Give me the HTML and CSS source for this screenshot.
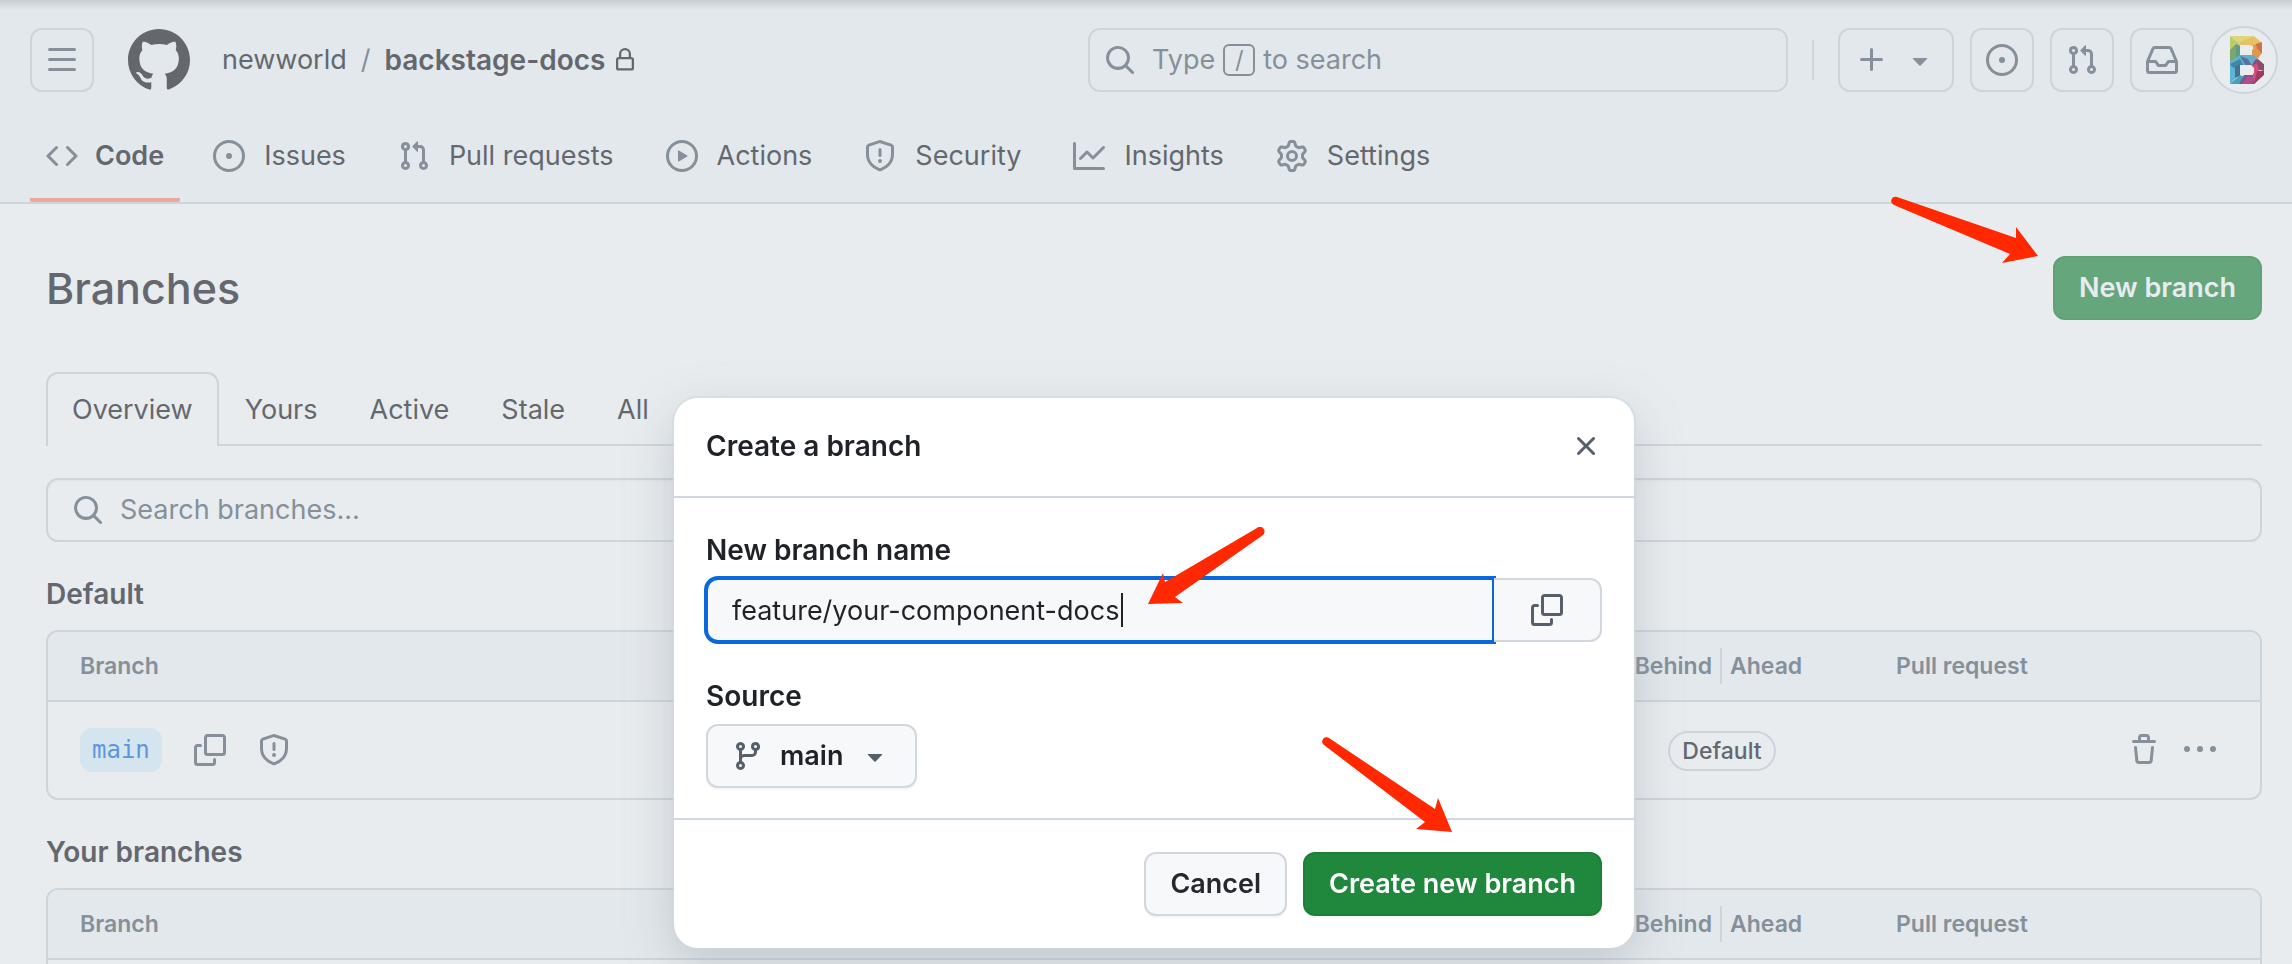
FILE: index.html
```html
<!DOCTYPE html>
<html lang="en">
<head>
<meta charset="utf-8">
<title>Branches · newworld/backstage-docs</title>
<link rel="stylesheet" href="styles.css">
</head>
<body>
<svg class="sprite" aria-hidden="true">
  <symbol id="i-bars" viewBox="0 0 16 16"><path d="M1 2.75A.75.75 0 0 1 1.75 2h12.5a.75.75 0 0 1 0 1.5H1.75A.75.75 0 0 1 1 2.75Zm0 5A.75.75 0 0 1 1.75 7h12.5a.75.75 0 0 1 0 1.5H1.75A.75.75 0 0 1 1 7.75ZM1.75 12h12.5a.75.75 0 0 1 0 1.5H1.75a.75.75 0 0 1 0-1.5Z"/></symbol>
  <symbol id="i-mark" viewBox="0 0 16 16"><path d="M8 0c4.42 0 8 3.58 8 8a8.013 8.013 0 0 1-5.45 7.59c-.4.08-.55-.17-.55-.38 0-.27.01-1.13.01-2.2 0-.75-.25-1.23-.54-1.48 1.78-.2 3.65-.88 3.65-3.95 0-.88-.31-1.59-.82-2.15.08-.2.36-1.02-.08-2.12 0 0-.67-.22-2.2.82-.64-.18-1.32-.27-2-.27-.68 0-1.36.09-2 .27-1.53-1.03-2.2-.82-2.2-.82-.44 1.1-.16 1.92-.08 2.12-.51.56-.82 1.28-.82 2.15 0 3.06 1.86 3.75 3.64 3.95-.23.2-.44.55-.51 1.07-.46.21-1.61.55-2.33-.66-.15-.24-.6-.83-1.23-.82-.67.01-.27.38.01.53.34.19.73.9.82 1.13.16.45.68 1.31 2.69.94 0 .67.01 1.3.01 1.49 0 .21-.15.45-.55.38A7.995 7.995 0 0 1 0 8c0-4.42 3.58-8 8-8Z"/></symbol>
  <symbol id="i-lock" viewBox="0 0 16 16"><path d="M4 4a4 4 0 0 1 8 0v2h.25c.966 0 1.75.784 1.75 1.75v5.5A1.75 1.75 0 0 1 12.25 15h-8.5A1.75 1.75 0 0 1 2 13.25v-5.5C2 6.784 2.784 6 3.75 6H4Zm8.25 3.5h-8.5a.25.25 0 0 0-.25.25v5.5c0 .138.112.25.25.25h8.5a.25.25 0 0 0 .25-.25v-5.5a.25.25 0 0 0-.25-.25ZM10.5 6V4a2.5 2.5 0 1 0-5 0v2Z"/></symbol>
  <symbol id="i-search" viewBox="0 0 16 16"><path d="M10.68 11.74a6 6 0 0 1-7.922-8.982 6 6 0 0 1 8.982 7.922l3.04 3.04a.749.749 0 0 1-.326 1.275.749.749 0 0 1-.734-.215ZM11.5 7a4.499 4.499 0 1 0-8.997 0A4.499 4.499 0 0 0 11.5 7Z"/></symbol>
  <symbol id="i-plus" viewBox="0 0 16 16"><path d="M7.75 2a.75.75 0 0 1 .75.75V7h4.25a.75.75 0 0 1 0 1.5H8.5v4.25a.75.75 0 0 1-1.5 0V8.5H2.75a.75.75 0 0 1 0-1.5H7V2.75A.75.75 0 0 1 7.75 2Z"/></symbol>
  <symbol id="i-caret" viewBox="0 0 16 16"><path d="m4.427 7.427 3.396 3.396a.25.25 0 0 0 .354 0l3.396-3.396A.25.25 0 0 0 11.396 7H4.604a.25.25 0 0 0-.177.427Z"/></symbol>
  <symbol id="i-issue" viewBox="0 0 16 16"><path d="M8 9.5a1.5 1.5 0 1 0 0-3 1.5 1.5 0 0 0 0 3Z"/><path d="M8 0a8 8 0 1 1 0 16A8 8 0 0 1 8 0ZM1.5 8a6.5 6.5 0 1 0 13 0 6.5 6.5 0 0 0-13 0Z"/></symbol>
  <symbol id="i-pull" viewBox="0 0 16 16"><path d="M1.5 3.25a2.25 2.25 0 1 1 3 2.122v5.256a2.251 2.251 0 1 1-1.5 0V5.372A2.25 2.25 0 0 1 1.5 3.25Zm5.677-.177L9.573.677A.25.25 0 0 1 10 .854V2.5h1A2.5 2.5 0 0 1 13.5 5v5.628a2.251 2.251 0 1 1-1.5 0V5a1 1 0 0 0-1-1h-1v1.646a.25.25 0 0 1-.427.177L7.177 3.427a.25.25 0 0 1 0-.354ZM3.75 2.5a.75.75 0 1 0 0 1.5.75.75 0 0 0 0-1.5Zm0 9.5a.75.75 0 1 0 0 1.5.75.75 0 0 0 0-1.5Zm8.25.75a.75.75 0 1 0 1.5 0 .75.75 0 0 0-1.5 0Z"/></symbol>
  <symbol id="i-inbox" viewBox="0 0 16 16"><path d="M2.8 2.06A1.75 1.75 0 0 1 4.41 1h7.18c.7 0 1.333.417 1.61 1.06l2.74 6.395c.04.093.06.194.06.295v4.5A1.75 1.75 0 0 1 14.25 15H1.75A1.75 1.75 0 0 1 0 13.25v-4.5c0-.101.02-.202.06-.295Zm1.61.44a.25.25 0 0 0-.23.152L1.887 8H4.75a.75.75 0 0 1 .6.3L6.625 10h2.75l1.275-1.7a.75.75 0 0 1 .6-.3h2.863L11.82 2.652a.25.25 0 0 0-.23-.152Zm10.09 7h-2.875l-1.275 1.7a.75.75 0 0 1-.6.3h-3.5a.75.75 0 0 1-.6-.3L4.375 9.5H1.5v3.75c0 .138.112.25.25.25h12.5a.25.25 0 0 0 .25-.25Z"/></symbol>
  <symbol id="i-code" viewBox="0 0 16 16"><path d="m11.28 3.22 4.25 4.25a.75.75 0 0 1 0 1.06l-4.25 4.25a.749.749 0 0 1-1.275-.326.749.749 0 0 1 .215-.734L13.94 8l-3.72-3.72a.749.749 0 0 1 .326-1.275.749.749 0 0 1 .734.215Zm-6.56 0a.751.751 0 0 1 1.042.018.751.751 0 0 1 .018 1.042L2.06 8l3.72 3.72a.749.749 0 0 1-.326 1.275.749.749 0 0 1-.734-.215L.47 8.53a.75.75 0 0 1 0-1.06Z"/></symbol>
  <symbol id="i-play" viewBox="0 0 16 16"><path d="M8 0a8 8 0 1 1 0 16A8 8 0 0 1 8 0ZM1.5 8a6.5 6.5 0 1 0 13 0 6.5 6.5 0 0 0-13 0Zm4.879-2.773 4.264 2.559a.25.25 0 0 1 0 .428l-4.264 2.559A.25.25 0 0 1 6 10.559V5.442a.25.25 0 0 1 .379-.215Z"/></symbol>
  <symbol id="i-shield" viewBox="0 0 16 16"><path d="M7.467.133a1.748 1.748 0 0 1 1.066 0l5.25 1.68A1.75 1.75 0 0 1 15 3.48V7c0 1.566-.32 3.182-1.303 4.682-.983 1.498-2.585 2.813-5.032 3.855a1.697 1.697 0 0 1-1.33 0c-2.447-1.042-4.049-2.357-5.032-3.855C1.32 10.182 1 8.566 1 7V3.48a1.75 1.75 0 0 1 1.217-1.667Zm.61 1.429a.25.25 0 0 0-.153 0l-5.25 1.68a.25.25 0 0 0-.174.238V7c0 1.358.275 2.666 1.057 3.86.784 1.194 2.121 2.34 4.366 3.297a.196.196 0 0 0 .154 0c2.245-.956 3.582-2.104 4.366-3.298C13.225 9.666 13.5 8.36 13.5 7V3.48a.251.251 0 0 0-.174-.237l-5.25-1.68ZM8.75 4.75v3a.75.75 0 0 1-1.5 0v-3a.75.75 0 0 1 1.5 0ZM9 10.5a1 1 0 1 1-2 0 1 1 0 0 1 2 0Z"/></symbol>
  <symbol id="i-graph" viewBox="0 0 16 16"><path d="M1.5 1.75V13.5h13.75a.75.75 0 0 1 0 1.5H.75a.75.75 0 0 1-.75-.75V1.75a.75.75 0 0 1 1.5 0Zm14.28 2.53-5.25 5.25a.75.75 0 0 1-1.06 0L7 7.06 4.28 9.78a.751.751 0 0 1-1.042-.018.751.751 0 0 1-.018-1.042l3.25-3.25a.75.75 0 0 1 1.06 0L10 7.94l4.72-4.72a.751.751 0 0 1 1.042.018.751.751 0 0 1 .018 1.042Z"/></symbol>
  <symbol id="i-gear" viewBox="0 0 16 16"><path d="M8 0a8.2 8.2 0 0 1 .701.031C9.444.095 9.99.645 10.16 1.29l.288 1.107c.018.066.079.158.212.224.231.114.454.243.668.386.123.082.233.09.299.071l1.103-.303c.644-.176 1.392.021 1.82.63.27.385.506.792.704 1.218.315.675.111 1.422-.364 1.891l-.814.806c-.049.048-.098.147-.088.294.016.257.016.515 0 .772-.01.147.038.246.088.294l.814.806c.475.469.679 1.216.364 1.891a7.977 7.977 0 0 1-.704 1.217c-.428.61-1.176.807-1.82.63l-1.102-.302c-.067-.019-.177-.011-.3.071a5.909 5.909 0 0 1-.668.386c-.133.066-.194.158-.211.224l-.29 1.106c-.168.646-.715 1.196-1.458 1.26a8.006 8.006 0 0 1-1.402 0c-.743-.064-1.289-.614-1.458-1.26l-.289-1.106c-.018-.066-.079-.158-.212-.224a5.738 5.738 0 0 1-.668-.386c-.123-.082-.233-.09-.299-.071l-1.103.303c-.644.176-1.392-.021-1.82-.63a8.12 8.12 0 0 1-.704-1.218c-.315-.675-.111-1.422.363-1.891l.815-.806c.05-.048.098-.147.088-.294a6.214 6.214 0 0 1 0-.772c.01-.147-.038-.246-.088-.294l-.815-.806C.635 6.045.431 5.298.746 4.623a7.92 7.92 0 0 1 .704-1.217c.428-.61 1.176-.807 1.82-.63l1.102.302c.067.019.177.011.3-.071.214-.143.437-.272.668-.386.133-.066.194-.158.211-.224l.29-1.106C6.009.645 6.556.095 7.299.03 7.53.01 7.764 0 8 0Zm-.571 1.525c-.036.003-.108.036-.137.146l-.289 1.105c-.147.561-.549.967-.998 1.189-.173.086-.34.183-.5.29-.417.278-.97.423-1.529.27l-1.103-.303c-.109-.03-.175.016-.195.045-.22.312-.412.644-.573.99-.014.031-.021.11.059.19l.815.806c.411.406.562.957.53 1.456a4.709 4.709 0 0 0 0 .582c.032.499-.119 1.05-.53 1.456l-.815.806c-.081.08-.073.159-.059.19.162.346.353.677.573.989.02.03.085.076.195.046l1.102-.303c.56-.153 1.113-.008 1.53.27.161.107.328.204.501.29.447.222.85.629.997 1.189l.289 1.105c.029.109.101.143.137.146a6.6 6.6 0 0 0 1.142 0c.036-.003.108-.036.137-.146l.289-1.105c.147-.561.549-.967.998-1.189.173-.086.34-.183.5-.29.417-.278.97-.423 1.529-.27l1.103.303c.109.029.175-.016.195-.045.22-.313.411-.644.573-.99.014-.031.021-.11-.059-.19l-.815-.806c-.411-.406-.562-.957-.53-1.456a4.709 4.709 0 0 0 0-.582c-.032-.499.119-1.05.53-1.456l.815-.806c.081-.08.073-.159.059-.19a6.464 6.464 0 0 0-.573-.989c-.02-.03-.085-.076-.195-.046l-1.102.303c-.56.153-1.113.008-1.53-.27a4.44 4.44 0 0 0-.501-.29c-.447-.222-.85-.629-.997-1.189l-.289-1.105c-.029-.11-.101-.143-.137-.146a6.6 6.6 0 0 0-1.142 0ZM11 8a3 3 0 1 1-6 0 3 3 0 0 1 6 0ZM9.5 8a1.5 1.5 0 1 0-3.001.001A1.5 1.5 0 0 0 9.5 8Z"/></symbol>
  <symbol id="i-copy" viewBox="0 0 16 16"><path d="M0 6.75C0 5.784.784 5 1.75 5h1.5a.75.75 0 0 1 0 1.5h-1.5a.25.25 0 0 0-.25.25v7.5c0 .138.112.25.25.25h7.5a.25.25 0 0 0 .25-.25v-1.5a.75.75 0 0 1 1.5 0v1.5A1.75 1.75 0 0 1 9.25 16h-7.5A1.75 1.75 0 0 1 0 14.25Z"/><path d="M5 1.75C5 .784 5.784 0 6.75 0h7.5C15.216 0 16 .784 16 1.75v7.5A1.75 1.75 0 0 1 14.25 11h-7.5A1.75 1.75 0 0 1 5 9.25Zm1.75-.25a.25.25 0 0 0-.25.25v7.5c0 .138.112.25.25.25h7.5a.25.25 0 0 0 .25-.25v-7.5a.25.25 0 0 0-.25-.25Z"/></symbol>
  <symbol id="i-trash" viewBox="0 0 16 16"><path d="M11 1.75V3h2.25a.75.75 0 0 1 0 1.5H2.75a.75.75 0 0 1 0-1.5H5V1.75C5 .784 5.784 0 6.75 0h2.5C10.216 0 11 .784 11 1.75ZM4.496 6.675l.66 6.6a.25.25 0 0 0 .249.225h5.19a.25.25 0 0 0 .249-.225l.66-6.6a.75.75 0 0 1 1.492.149l-.66 6.6A1.748 1.748 0 0 1 10.595 15h-5.19a1.75 1.75 0 0 1-1.741-1.575l-.66-6.6a.75.75 0 1 1 1.492-.15ZM6.5 1.75V3h3V1.75a.25.25 0 0 0-.25-.25h-2.5a.25.25 0 0 0-.25.25Z"/></symbol>
  <symbol id="i-kebab" viewBox="0 0 16 16"><path d="M8 9a1.5 1.5 0 1 0 0-3 1.5 1.5 0 0 0 0 3ZM1.5 9a1.5 1.5 0 1 0 0-3 1.5 1.5 0 0 0 0 3Zm13 0a1.5 1.5 0 1 0 0-3 1.5 1.5 0 0 0 0 3Z"/></symbol>
  <symbol id="i-branch" viewBox="0 0 16 16"><path d="M9.5 3.25a2.25 2.25 0 1 1 3 2.122V6A2.5 2.5 0 0 1 10 8.5H6a1 1 0 0 0-1 1v1.128a2.251 2.251 0 1 1-1.5 0V5.372a2.25 2.25 0 1 1 1.5 0v1.836A2.493 2.493 0 0 1 6 7h4a1 1 0 0 0 1-1v-.628A2.25 2.25 0 0 1 9.5 3.25Zm-6 0a.75.75 0 1 0 1.5 0 .75.75 0 0 0-1.5 0Zm8.25-.75a.75.75 0 1 0 0 1.5.75.75 0 0 0 0-1.5ZM4.25 12a.75.75 0 1 0 0 1.5.75.75 0 0 0 0-1.5Z"/></symbol>
  <symbol id="i-x" viewBox="0 0 16 16"><path d="M3.72 3.72a.75.75 0 0 1 1.06 0L8 6.94l3.22-3.22a.749.749 0 0 1 1.275.326.749.749 0 0 1-.215.734L9.06 8l3.22 3.22a.749.749 0 0 1-.326 1.275.749.749 0 0 1-.734-.215L8 9.06l-3.22 3.22a.751.751 0 0 1-1.042-.018.751.751 0 0 1-.018-1.042L6.94 8 3.72 4.78a.75.75 0 0 1 0-1.06Z"/></symbol>
</svg>

<div class="app">
<header class="app-header">
  <div class="topbar">
    <button class="icon-btn" type="button" aria-label="Open menu"><svg class="icon"><use href="#i-bars"/></svg></button>
    <a class="home" href="#" aria-label="Homepage"><svg class="mark"><use href="#i-mark"/></svg></a>
    <nav class="crumbs" aria-label="Breadcrumb">
      <a href="#">newworld</a>
      <span class="slash">/</span>
      <a class="repo" href="#">backstage-docs</a>
      <svg class="icon-sm"><use href="#i-lock"/></svg>
    </nav>
    <div class="topbar-right">
      <button class="search-btn" type="button">
        <svg class="icon"><use href="#i-search"/></svg>
        <span class="search-hint">Type <kbd>/</kbd> to search</span>
      </button>
      <span class="divider"></span>
      <div class="actions">
        <button class="icon-btn create" type="button" aria-label="Create new"><svg class="icon"><use href="#i-plus"/></svg><svg class="icon"><use href="#i-caret"/></svg></button>
        <button class="icon-btn" type="button" aria-label="Issues"><svg class="icon"><use href="#i-issue"/></svg></button>
        <button class="icon-btn" type="button" aria-label="Pull requests"><svg class="icon"><use href="#i-pull"/></svg></button>
        <button class="icon-btn" type="button" aria-label="Notifications"><svg class="icon"><use href="#i-inbox"/></svg></button>
        <button class="avatar" type="button" aria-label="Account">
          <svg viewBox="0 0 34 48" class="avatar-art">
            <path fill="#ddd77a" d="M0 0h24l-6 4-8 4z"/>
            <path fill="#b9ce6a" d="M0 0l10 8v10L0 26z"/>
            <path fill="#7ba66f" d="M0 14l6-6v18l-6 8z"/>
            <path fill="#5e9c82" d="M6 8l4 2v11l-4 5z"/>
            <path fill="#e6c263" d="M10 6L24 0l8 6-9 4H10z"/>
            <path fill="#e3a04b" d="M23 9l9-3v8l-9 1z"/>
            <path fill="#cf6f4c" d="M26 8l6-2v12l-5-5z"/>
            <path fill="#e2974c" d="M22 14l5-2 5 6-4 5-6-2z"/>
            <path fill="#5fb1c9" d="M0 25l10-6h13l5 4-6 7H10L0 34z"/>
            <path fill="#3f86a8" d="M0 28l10-5 4 7-8 5z"/>
            <path fill="#5b6f9b" d="M10 20l8 3 4 7h-6z"/>
            <path fill="#5eb4d3" d="M0 31l6 1v10L0 48z"/>
            <path fill="#456f94" d="M5 31l5-3v12l-5 2z"/>
            <path fill="#4ba0b9" d="M0 48l10-9 6 3-6 6z"/>
            <path fill="#7a5a8d" d="M9 48l5-9h9l3 9z"/>
            <path fill="#b64b8f" d="M12 48l6-8 6 2-4 6z"/>
            <path fill="#8e4b73" d="M25 24l3-1 6 5v7l-9-2-3-4z"/>
            <path fill="#d44f7e" d="M22 30l5-3 2 8 5 0v4L24 48l-1-9z"/>
            <path fill="#a5385d" d="M27 35h7v4l-10 9z"/>
            <path fill="#e8ecef" d="M10 9h10l2 3v5l-2 2H10zM10 29h11l3 3v5l-2 2H10z"/>
          </svg>
        </button>
      </div>
    </div>
  </div>
  <nav class="repo-nav" aria-label="Repository">
    <a class="repo-tab current" href="#" aria-current="page"><svg class="icon"><use href="#i-code"/></svg><span>Code</span></a>
    <a class="repo-tab" href="#"><svg class="icon"><use href="#i-issue"/></svg><span>Issues</span></a>
    <a class="repo-tab" href="#"><svg class="icon"><use href="#i-pull"/></svg><span>Pull requests</span></a>
    <a class="repo-tab" href="#"><svg class="icon"><use href="#i-play"/></svg><span>Actions</span></a>
    <a class="repo-tab" href="#"><svg class="icon"><use href="#i-shield"/></svg><span>Security</span></a>
    <a class="repo-tab" href="#"><svg class="icon"><use href="#i-graph"/></svg><span>Insights</span></a>
    <a class="repo-tab" href="#"><svg class="icon"><use href="#i-gear"/></svg><span>Settings</span></a>
  </nav>
</header>

<main class="page">
  <div class="page-head">
    <h1>Branches</h1>
    <button class="btn primary faded" type="button">New branch</button>
  </div>
  <nav class="tabs" aria-label="Branch filters">
    <a class="tab selected" href="#" aria-current="page">Overview</a>
    <a class="tab" href="#">Yours</a>
    <a class="tab" href="#">Active</a>
    <a class="tab" href="#">Stale</a>
    <a class="tab" href="#">All</a>
  </nav>
  <label class="filter">
    <svg class="icon"><use href="#i-search"/></svg>
    <input type="search" placeholder="Search branches..." aria-label="Search branches">
  </label>

  <section class="group">
    <h2>Default</h2>
    <div class="box">
      <table>
        <colgroup><col><col class="col-counts"><col class="col-pr"><col class="col-actions"></colgroup>
        <thead>
          <tr><th scope="col">Branch</th><th scope="col"><span class="counts"><span>Behind</span><span>Ahead</span></span></th><th scope="col">Pull request</th><th></th></tr>
        </thead>
        <tbody>
          <tr>
            <td><div class="branch-cell"><a class="branch-name" href="#">main</a><button class="plain" type="button" aria-label="Copy branch name"><svg class="icon"><use href="#i-copy"/></svg></button><svg class="icon"><use href="#i-shield"/></svg></div></td>
            <td class="center"><span class="pill">Default</span></td>
            <td></td>
            <td><div class="row-actions"><button class="plain" type="button" aria-label="Delete branch"><svg class="icon"><use href="#i-trash"/></svg></button><button class="plain" type="button" aria-label="More options"><svg class="icon"><use href="#i-kebab"/></svg></button></div></td>
          </tr>
        </tbody>
      </table>
    </div>
  </section>

  <section class="group">
    <h2>Your branches</h2>
    <div class="box">
      <table>
        <colgroup><col><col class="col-counts"><col class="col-pr"><col class="col-actions"></colgroup>
        <thead>
          <tr><th scope="col">Branch</th><th scope="col"><span class="counts"><span>Behind</span><span>Ahead</span></span></th><th scope="col">Pull request</th><th></th></tr>
        </thead>
        <tbody>
          <tr><td></td><td></td><td></td><td></td></tr>
        </tbody>
      </table>
    </div>
  </section>
</main>
</div>

<div class="overlay">
  <div class="dialog" role="dialog" aria-modal="true" aria-labelledby="dialog-title">
    <div class="dialog-head">
      <h2 id="dialog-title">Create a branch</h2>
      <button class="plain" type="button" aria-label="Close"><svg class="icon"><use href="#i-x"/></svg></button>
    </div>
    <div class="dialog-body">
      <div class="field">
        <label for="branch-name">New branch name</label>
        <div class="input-group">
          <div class="input-wrap">
            <input id="branch-name" type="text" value="feature/your-component-docs">
            <span class="caret"></span>
          </div>
          <button class="copy-btn" type="button" aria-label="Copy"><svg class="icon"><use href="#i-copy"/></svg></button>
        </div>
      </div>
      <div class="field">
        <label for="source">Source</label>
        <div class="select-wrap">
          <svg class="icon lead"><use href="#i-branch"/></svg>
          <select id="source"><option>main</option></select>
          <svg class="icon tail"><use href="#i-caret"/></svg>
        </div>
      </div>
    </div>
    <div class="dialog-foot">
      <button class="btn" type="button">Cancel</button>
      <button class="btn primary" type="button">Create new branch</button>
    </div>
  </div>
</div>

<svg class="arrow arrow-new" viewBox="0 0 148 68"><path d="M6 1 125 42V31l22 29-36 7 8-9L3 9A4 4 0 0 1 6 1Z"/></svg>
<svg class="arrow arrow-name" viewBox="0 0 118 78"><path d="M110 1 18 55 16 46 1 77 36 76 28 70 116 8A4 4 0 0 0 110 1Z"/></svg>
<svg class="arrow arrow-create" viewBox="0 0 131 96"><path d="M7 1 113 72 116 61 130 95 94 92 103 85 2 8A4 4 0 0 1 7 1Z"/></svg>
</body>
</html>
```
FILE: styles.css
```css
:root {
  --bg: #e8ecef;
  --bg-subtle: #e3e8ec;
  --line: #ccd5dc;
  --text: #64686e;
  --muted: #85909a;
  --ink: #1f2328;
  --ink-muted: #57606a;
  --ink-line: #d0d7de;
  --accent: #0969da;
  --sans: Inter, "Liberation Sans", sans-serif;
}

* { box-sizing: border-box; }

body {
  margin: 0;
  background: var(--bg);
  color: var(--text);
  font: 27px/40px var(--sans);
}

/* The page behind the open dialog does not scroll */
.app { height: 100vh; overflow: hidden; }

a { color: inherit; text-decoration: none; }
button, input, select { font: inherit; color: inherit; margin: 0; }
h1, h2 { margin: 0; }

.sprite { display: none; }
.icon { width: 32px; height: 32px; flex: none; display: block; fill: var(--muted); }
.icon-sm { width: 24px; height: 24px; flex: none; fill: var(--text); }
.plain { border: 0; padding: 0; background: none; }

/* Header */
.app-header {
  background: linear-gradient(#c8cdd1, var(--bg-subtle) 10px);
  border-bottom: 2px solid var(--line);
}
.topbar { display: flex; align-items: center; padding: 26px 14px 0 30px; }
.icon-btn {
  display: flex;
  align-items: center;
  justify-content: center;
  width: 64px;
  height: 64px;
  padding: 0;
  border: 2px solid var(--line);
  border-radius: 12px;
  background: none;
}
.icon-btn.create { width: 116px; gap: 16px; }
.home { margin: 0 32px 0 34px; }
.mark { display: block; width: 62px; height: 62px; fill: var(--text); }
.crumbs { display: flex; align-items: center; }
.slash { color: var(--muted); margin: 0 14px; }
.repo { font-size: 28px; font-weight: 600; margin-right: 8px; }
.topbar-right { display: flex; align-items: center; margin-left: auto; }
.search-btn {
  display: flex;
  align-items: center;
  gap: 16px;
  width: 700px;
  height: 64px;
  padding: 0 14px;
  border: 2px solid var(--line);
  border-radius: 12px;
  background: none;
  color: var(--muted);
}
.search-hint { display: flex; align-items: center; gap: 8px; }
kbd {
  width: 32px;
  height: 32px;
  border: 2px solid var(--muted);
  border-radius: 6px;
  font: 24px/28px var(--sans);
}
.divider { width: 2px; height: 40px; margin: 0 24px; background: var(--line); }
.actions { display: flex; align-items: center; gap: 16px; }
.avatar {
  display: flex;
  align-items: center;
  justify-content: center;
  width: 68px;
  height: 68px;
  padding: 0 0 0 6px;
  border: 2px solid var(--line);
  border-radius: 50%;
  background: var(--bg);
}
.avatar-art { width: 34px; height: 48px; clip-path: polygon(0 0, 70% 0, 94% 14%, 94% 36%, 82% 47%, 100% 59%, 100% 82%, 72% 100%, 0 100%); }

.repo-nav { display: flex; gap: 20px; padding: 22px 30px 0; }
.repo-tab {
  display: flex;
  align-items: center;
  gap: 19px;
  height: 86px;
  padding: 0 16px 6px;
}
.repo-tab.current {
  gap: 17px;
  padding-bottom: 2px;
  font-weight: 600;
  border-bottom: 4px solid #eba99d;
  border-radius: 2px;
  margin-right: -3px;
}

/* Page */
.page { padding: 52px 30px 0 46px; }
.page-head { display: flex; align-items: center; justify-content: space-between; }
h1 { font-size: 43px; line-height: 64px; font-weight: 500; }
.btn {
  height: 64px;
  padding: 0 24px;
  border: 2px solid var(--ink-line);
  border-radius: 12px;
  background: #f6f8fa;
  color: #25292e;
  font-weight: 600;
  box-shadow: 0 2px 0 rgba(31, 35, 40, 0.04);
}
.btn.primary { background: #1f883d; border-color: #1d7f39; color: #fff; }
.btn.primary.faded { background: #65a67c; border-color: #60a177; color: var(--bg); box-shadow: none; }

.tabs { display: flex; margin-top: 52px; border-bottom: 2px solid var(--line); }
.tab { padding: 18px 26px 16px; height: 74px; margin-bottom: -2px; }
.tab.selected {
  padding: 16px 24px;
  border: 2px solid var(--line);
  border-bottom: 0;
  border-radius: 12px 12px 0 0;
  background: var(--bg);
}
.filter {
  display: flex;
  align-items: center;
  gap: 16px;
  height: 64px;
  margin-top: 32px;
  padding: 0 24px;
  border: 2px solid var(--line);
  border-radius: 12px;
  box-shadow: inset 0 2px 0 rgba(140, 149, 159, 0.06);
}
.filter input {
  flex: 1;
  border: 0;
  padding: 0;
  outline: 0;
  background: none;
}
.filter input::placeholder { color: var(--muted); opacity: 1; }

.group h2 { margin: 32px 0 16px; font-size: 28px; line-height: 40px; font-weight: 600; }
.group .box { border: 2px solid var(--line); border-radius: 12px; overflow: hidden; }
table { width: 100%; table-layout: fixed; border-collapse: separate; border-spacing: 0; }
.col-counts { width: 316px; }
.col-pr { width: 200px; }
.col-actions { width: 180px; }
th {
  height: 70px;
  padding: 0 16px;
  border-bottom: 2px solid var(--line);
  background: var(--bg-subtle);
  color: var(--muted);
  font-size: 23px;
  font-weight: 600;
  line-height: 36px;
  text-align: left;
  white-space: nowrap;
}
td { height: 96px; padding: 0 16px; }
th:first-child, td:first-child { padding-left: 32px; }
.counts { display: grid; grid-template-columns: 1fr 1fr; }
.counts span { padding: 0 8px; }
.counts span:first-child { text-align: right; border-right: 2px solid var(--line); }
.center { text-align: center; }
.branch-cell { display: flex; align-items: center; gap: 32px; }
.branch-name {
  padding: 4px 12px;
  border-radius: 12px;
  background: #d5e5ef;
  color: #5a97dd;
  font: 24px/36px "DejaVu Sans Mono", monospace;
}
.pill {
  display: inline-block;
  padding: 0 12px;
  border: 2px solid var(--line);
  border-radius: 20px;
  font-size: 23px;
  line-height: 36px;
  font-weight: 500;
}
.row-actions { display: flex; justify-content: flex-end; gap: 24px; padding-right: 28px; }

/* Dialog */
.overlay {
  position: fixed;
  inset: 0;
  display: flex;
  align-items: flex-end;
  justify-content: center;
  padding: 0 0 16px 16px;
}
.dialog {
  width: 960px;
  border-radius: 24px;
  background: #fff;
  color: var(--ink);
  box-shadow: 0 0 0 2px rgba(208, 215, 222, 0.5), 0 16px 48px rgba(140, 149, 159, 0.4);
}
.dialog .icon { fill: var(--ink-muted); }
.dialog-head {
  display: flex;
  align-items: center;
  justify-content: space-between;
  padding: 28px 32px 30px;
  border-bottom: 2px solid var(--ink-line);
}
.dialog h2 { font-size: 28px; line-height: 40px; font-weight: 600; }
.dialog label { display: block; margin-bottom: 8px; font-size: 28px; font-weight: 600; }
.dialog-body { padding: 32px 32px 30px; display: grid; gap: 34px; }
.input-group { display: flex; }
.input-wrap { position: relative; flex: 1; }
.input-wrap input {
  display: block;
  width: 100%;
  height: 64px;
  padding: 0 24px;
  border: 2px solid var(--accent);
  border-radius: 12px 0 0 12px;
  outline: 0;
  background: #f6f8fa;
  box-shadow: 0 0 0 2px var(--accent);
}
.caret { position: absolute; top: 15px; left: 415px; width: 2px; height: 34px; background: var(--ink); }
.copy-btn {
  position: relative;
  display: flex;
  align-items: center;
  justify-content: center;
  width: 108px;
  height: 64px;
  padding: 0;
  border: 2px solid var(--ink-line);
  border-left: 0;
  border-radius: 0 12px 12px 0;
  background: #f6f8fa;
}
.select-wrap { position: relative; width: 211px; }
.select-wrap select {
  display: block;
  appearance: none;
  width: 100%;
  height: 64px;
  padding: 0 72px;
  border: 2px solid var(--ink-line);
  border-radius: 12px;
  background: #f6f8fa;
  font-weight: 600;
  box-shadow: 0 2px 0 rgba(31, 35, 40, 0.04);
}
.select-wrap .icon { position: absolute; top: 16px; pointer-events: none; }
.select-wrap .lead { left: 26px; }
.select-wrap .tail { right: 26px; }
.dialog-foot {
  display: flex;
  justify-content: flex-end;
  gap: 16px;
  padding: 32px;
  border-top: 2px solid var(--ink-line);
}

/* Annotation arrows */
.arrow { position: absolute; fill: #ff2800; }
.arrow-new { left: 1891px; top: 196px; width: 148px; }
.arrow-name { left: 1147px; top: 527px; width: 118px; }
.arrow-create { left: 1322px; top: 737px; width: 131px; }
```
